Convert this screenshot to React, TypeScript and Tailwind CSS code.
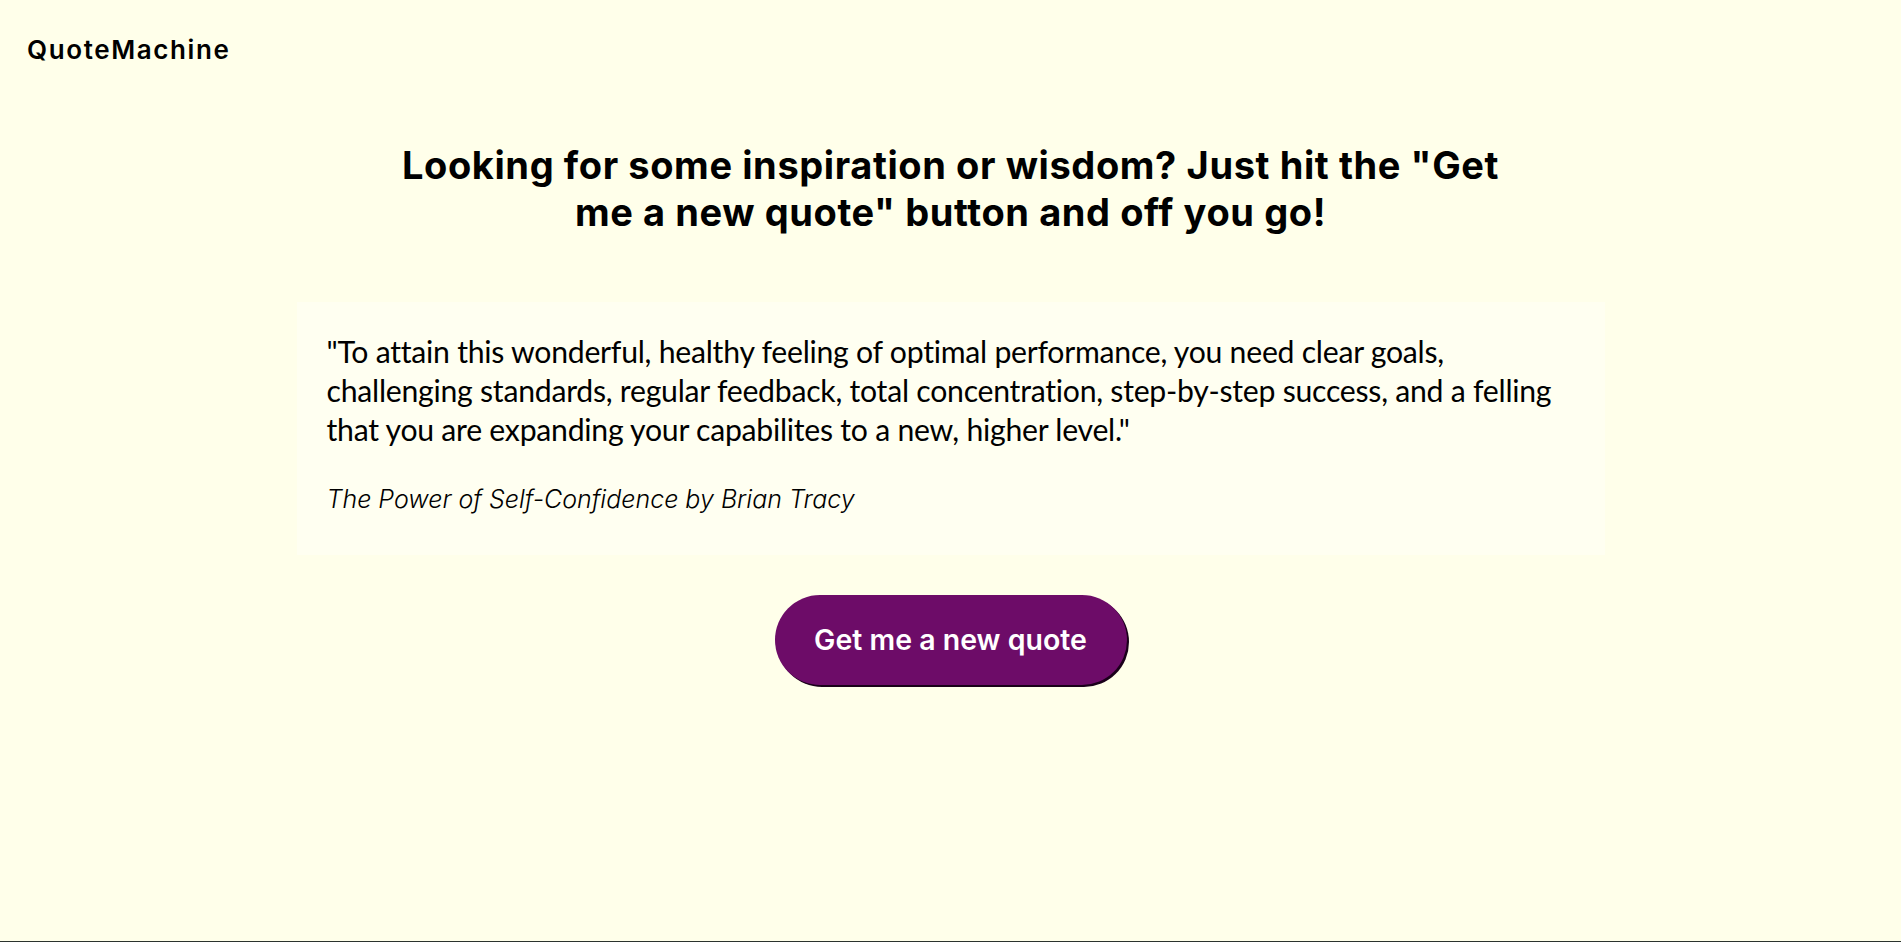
const quoteLines = [
  "\"To attain this wonderful, healthy feeling of optimal performance, you need clear goals,",
  "challenging standards, regular feedback, total concentration, step-by-step success, and a felling",
  "that you are expanding your capabilites to a new, higher level.\"",
];

const App = () => {
  return (
    <div className="flex flex-col h-[942px] bg-[#ffffea] border-b border-[#2b332e] font-['Inter',sans-serif] text-black overflow-hidden">
      <header className="px-[27px] pt-[35px]">
        <a href="#" className="text-[26px] leading-[30px] font-semibold tracking-[1.6px]">QuoteMachine</a>
      </header>
      <main className="flex flex-col items-center">
        <h1 className="mt-[77px] w-[1120px] text-center text-[38px] leading-[47px] font-bold tracking-[0.6px]">
          <span className="block">Looking for some inspiration or wisdom? Just hit the "Get</span>
          <span className="block">me a new quote" button and off you go!</span>
        </h1>
        <section className="mt-[66px] w-[1308px] bg-[#fffff1] pl-[30px] pt-[30px] pb-[41px]">
          <p className="font-['Lato',sans-serif] text-[30.2px] leading-[39px] tracking-[-0.25px]">
            {quoteLines.map((line) => (
              <span key={line} className="block">{line}</span>
            ))}
          </p>
          <p className="mt-[35px] text-[25px] leading-[30px] italic font-light">
            The Power of Self-Confidence by Brian Tracy
          </p>
        </section>
        <button className="mt-[40px] w-[352px] h-[90px] rounded-[45px] bg-[#6d0c68] text-white text-[28.5px] font-semibold shadow-[2px_2px_0_#1a001a]">
          Get me a new quote
        </button>
      </main>
    </div>
  );
};

export default App;
